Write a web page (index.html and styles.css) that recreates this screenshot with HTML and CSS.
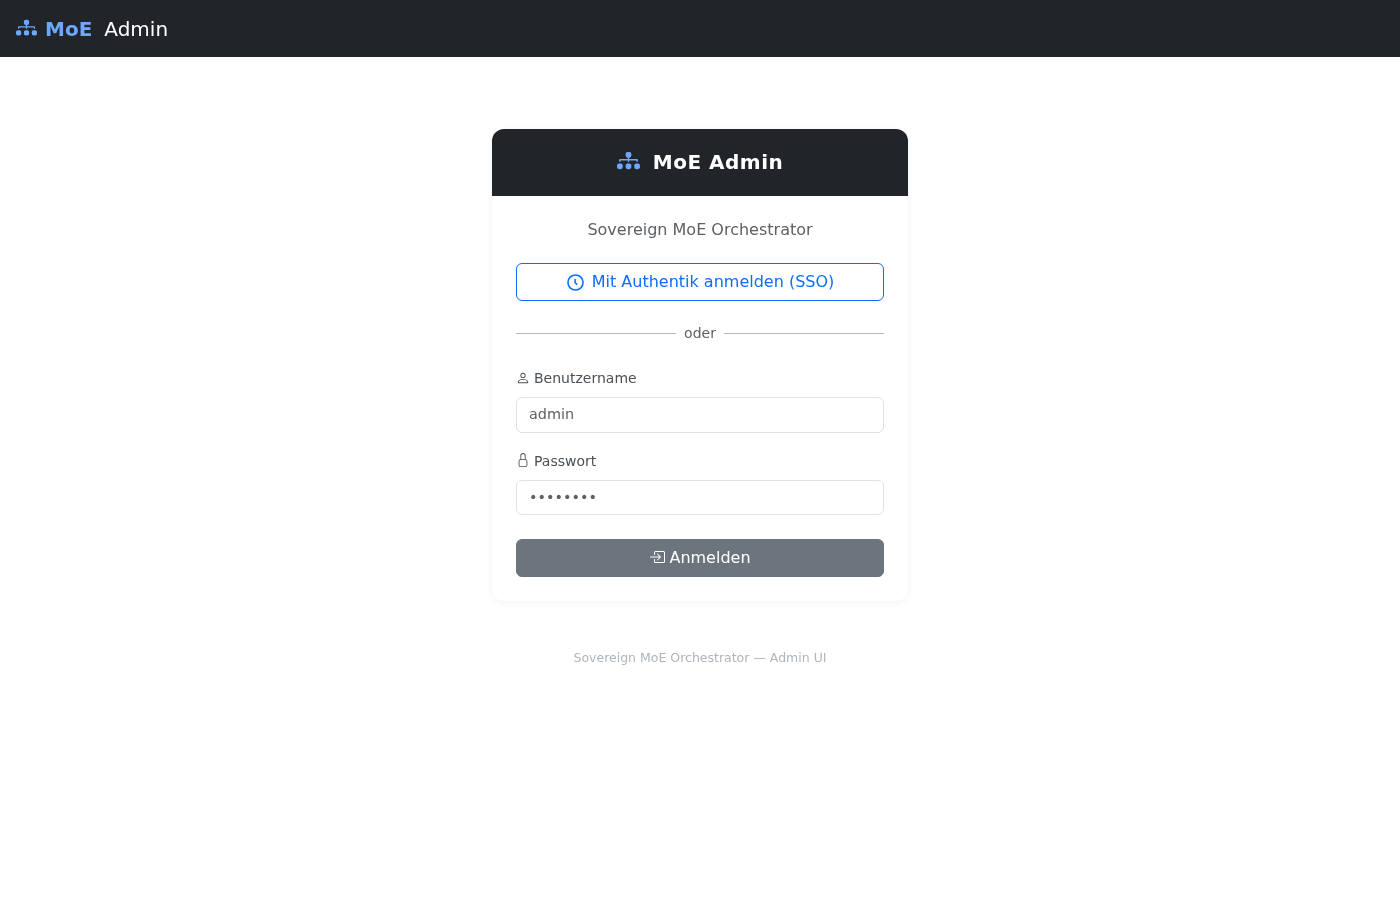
FILE: index.html
```html
<!DOCTYPE html>
<html lang="de">
<head>
	<meta charset="UTF-8">
	<title>MoE Admin</title>
	<link rel="stylesheet" href="styles.css">
</head>
<body>
	<nav class="navbar">
		<svg class="navicon" viewBox="0 0 16 16"><path fill-rule="evenodd" d="M6 3.5A1.5 1.5 0 0 1 7.5 2h1A1.5 1.5 0 0 1 10 3.5v1A1.5 1.5 0 0 1 8.5 6v1H14a.5.5 0 0 1 .5.5v1a.5.5 0 0 1-1 0V8h-5v.5a.5.5 0 0 1-1 0V8h-5v.5a.5.5 0 0 1-1 0v-1A.5.5 0 0 1 2 7h5.5V6A1.5 1.5 0 0 1 6 4.5zm-6 8A1.5 1.5 0 0 1 1.5 10h1A1.5 1.5 0 0 1 4 11.5v1A1.5 1.5 0 0 1 2.5 14h-1A1.5 1.5 0 0 1 0 12.5zm6 0A1.5 1.5 0 0 1 7.5 10h1a1.5 1.5 0 0 1 1.5 1.5v1A1.5 1.5 0 0 1 8.5 14h-1A1.5 1.5 0 0 1 6 12.5zm6 0a1.5 1.5 0 0 1 1.5-1.5h1a1.5 1.5 0 0 1 1.5 1.5v1a1.5 1.5 0 0 1-1.5 1.5h-1a1.5 1.5 0 0 1-1.5-1.5z"/></svg>
		<span class="navmoe">MoE</span>
		<span class="navadmin">Admin</span>
	</nav>

	<main class="page">
		<div class="card">
			<div class="cardhead">
				<svg class="headicon" viewBox="0 0 16 16"><path fill-rule="evenodd" d="M6 3.5A1.5 1.5 0 0 1 7.5 2h1A1.5 1.5 0 0 1 10 3.5v1A1.5 1.5 0 0 1 8.5 6v1H14a.5.5 0 0 1 .5.5v1a.5.5 0 0 1-1 0V8h-5v.5a.5.5 0 0 1-1 0V8h-5v.5a.5.5 0 0 1-1 0v-1A.5.5 0 0 1 2 7h5.5V6A1.5 1.5 0 0 1 6 4.5zm-6 8A1.5 1.5 0 0 1 1.5 10h1A1.5 1.5 0 0 1 4 11.5v1A1.5 1.5 0 0 1 2.5 14h-1A1.5 1.5 0 0 1 0 12.5zm6 0A1.5 1.5 0 0 1 7.5 10h1a1.5 1.5 0 0 1 1.5 1.5v1A1.5 1.5 0 0 1 8.5 14h-1A1.5 1.5 0 0 1 6 12.5zm6 0a1.5 1.5 0 0 1 1.5-1.5h1a1.5 1.5 0 0 1 1.5 1.5v1a1.5 1.5 0 0 1-1.5 1.5h-1a1.5 1.5 0 0 1-1.5-1.5z"/></svg>
				<span class="headtitle">MoE Admin</span>
			</div>
			<div class="cardbody">
				<div class="subtitle">Sovereign MoE Orchestrator</div>
				<a class="ssobtn" href="#">
					<svg class="ssoicon" viewBox="0 0 16 16"><circle cx="8" cy="8" r="7.1"/><path d="M7.6 4.6V8.2L9.6 10"/></svg>
					Mit Authentik anmelden (SSO)
				</a>
				<div class="divider"><span>oder</span></div>
				<label class="lbl" for="user">
					<svg class="lblicon" viewBox="0 0 16 16"><path d="M8 8a3 3 0 1 0 0-6 3 3 0 0 0 0 6m2-3a2 2 0 1 1-4 0 2 2 0 0 1 4 0m4 8c0 1-1 1-1 1H3s-1 0-1-1 1-4 6-4 6 3 6 4m-1-.004c-.001-.246-.154-.986-.832-1.664C11.516 10.68 10.289 10 8 10s-3.516.68-4.168 1.332c-.678.678-.83 1.418-.832 1.664z"/></svg>
					Benutzername
				</label>
				<input class="field" id="user" type="text" value="admin">
				<label class="lbl" for="pass">
					<svg class="lblicon" viewBox="0 0 16 16"><path d="M8 1a2 2 0 0 1 2 2v4H6V3a2 2 0 0 1 2-2m3 6V3a3 3 0 0 0-6 0v4a2 2 0 0 0-2 2v5a2 2 0 0 0 2 2h6a2 2 0 0 0 2-2V9a2 2 0 0 0-2-2M5 8h6a1 1 0 0 1 1 1v5a1 1 0 0 1-1 1H5a1 1 0 0 1-1-1V9a1 1 0 0 1 1-1"/></svg>
					Passwort
				</label>
				<input class="field" id="pass" type="password" value="password">
				<button class="loginbtn" type="button">
					<svg class="loginicon" viewBox="0 0 16 16"><path fill-rule="evenodd" d="M6 3.5a.5.5 0 0 1 .5-.5h8a.5.5 0 0 1 .5.5v9a.5.5 0 0 1-.5.5h-8a.5.5 0 0 1-.5-.5v-2a.5.5 0 0 0-1 0v2A1.5 1.5 0 0 0 6.5 14h8a1.5 1.5 0 0 0 1.5-1.5v-9A1.5 1.5 0 0 0 14.5 2h-8A1.5 1.5 0 0 0 5 3.5v2a.5.5 0 0 0 1 0z"/><path fill-rule="evenodd" d="M11.854 8.354a.5.5 0 0 0 0-.708l-3-3a.5.5 0 1 0-.708.708L10.293 7.5H1.5a.5.5 0 0 0 0 1h8.793l-2.147 2.146a.5.5 0 0 0 .708.708z"/></svg>
					Anmelden
				</button>
			</div>
		</div>
		<div class="foot">Sovereign MoE Orchestrator — Admin UI</div>
	</main>
</body>
</html>
```
FILE: styles.css
```css
*{
	margin: 0;
	padding: 0;
	box-sizing: border-box;
	font-family: "DejaVu Sans", sans-serif;
}
html{
	background-color: #fff;
}
body{
	color: #212529;
	will-change: transform;
}
.navbar{
	height: 57px;
	background-color: #212529;
	display: flex;
	align-items: center;
	padding-left: 16px;
}
.navicon{
	width: 21px;
	height: 21px;
	fill: #6ea8fe;
	margin-right: 8px;
	margin-bottom: 2px;
}
.navmoe{
	font-size: 20px;
	font-weight: bold;
	color: #6ea8fe;
	margin-right: 12px;
}
.navadmin{
	font-size: 20px;
	color: #fff;
}
.page{
	display: flex;
	flex-direction: column;
	align-items: center;
	padding-top: 72px;
}
.card{
	width: 416px;
	border-radius: 12px;
	background-color: #fff;
	box-shadow: 0 2px 8px rgba(0,0,0,0.05);
	overflow: hidden;
}
.cardhead{
	height: 67px;
	padding-bottom: 1px;
	background-color: #212529;
	display: flex;
	align-items: center;
	justify-content: center;
	gap: 13px;
}
.headicon{
	width: 23px;
	height: 23px;
	fill: #6ea8fe;
	margin-bottom: 3px;
}
.headtitle{
	font-size: 20px;
	font-weight: bold;
	letter-spacing: 0.5px;
	color: #fff;
}
.cardbody{
	padding: 24px;
	display: flex;
	flex-direction: column;
}
.subtitle{
	font-size: 16px;
	line-height: 19px;
	color: #5c6166;
	text-align: center;
	margin-bottom: 24px;
}
.ssobtn{
	height: 38px;
	padding: 0 0 1px 1px;
	border: 1px solid #0d6efd;
	border-radius: 6px;
	color: #0d6efd;
	font-size: 16px;
	text-decoration: none;
	display: flex;
	align-items: center;
	justify-content: center;
	gap: 8px;
}
.ssoicon{
	width: 17px;
	height: 17px;
	margin-top: 1px;
	fill: none;
	stroke: #0d6efd;
	stroke-width: 1.5;
}
.divider{
	display: flex;
	align-items: center;
	gap: 8px;
	margin: 21.5px 0 24.9px;
	font-size: 14px;
	line-height: 21px;
	color: #5c6166;
}
.divider::before, .divider::after{
	content: "";
	flex: 1;
	height: 1px;
	background-color: #bbb;
}
.lbl{
	display: flex;
	align-items: center;
	gap: 4px;
	font-size: 14px;
	line-height: 21px;
	color: #495057;
	margin-bottom: 8px;
}
.lblicon{
	width: 14px;
	height: 14px;
	fill: #495057;
	margin-bottom: 2px;
}
.field{
	height: 35.6px;
	border: 1px solid #dee2e6;
	border-radius: 6px;
	padding: 0 12px 1.5px;
	font-size: 14.4px;
	color: #5c6166;
	margin-bottom: 17.6px;
	outline: none;
}
.loginbtn{
	height: 38px;
	margin-top: 5.8px;
	padding-bottom: 1px;
	border: 1px solid #6c757d;
	border-radius: 6px;
	background-color: #6c757d;
	color: #fff;
	font-size: 16px;
	display: flex;
	align-items: center;
	justify-content: center;
	gap: 4px;
}
.loginicon{
	width: 16px;
	height: 16px;
	fill: #fff;
}
.foot{
	margin-top: 48px;
	font-size: 12.5px;
	line-height: 18px;
	color: #adb5bd;
}
```
